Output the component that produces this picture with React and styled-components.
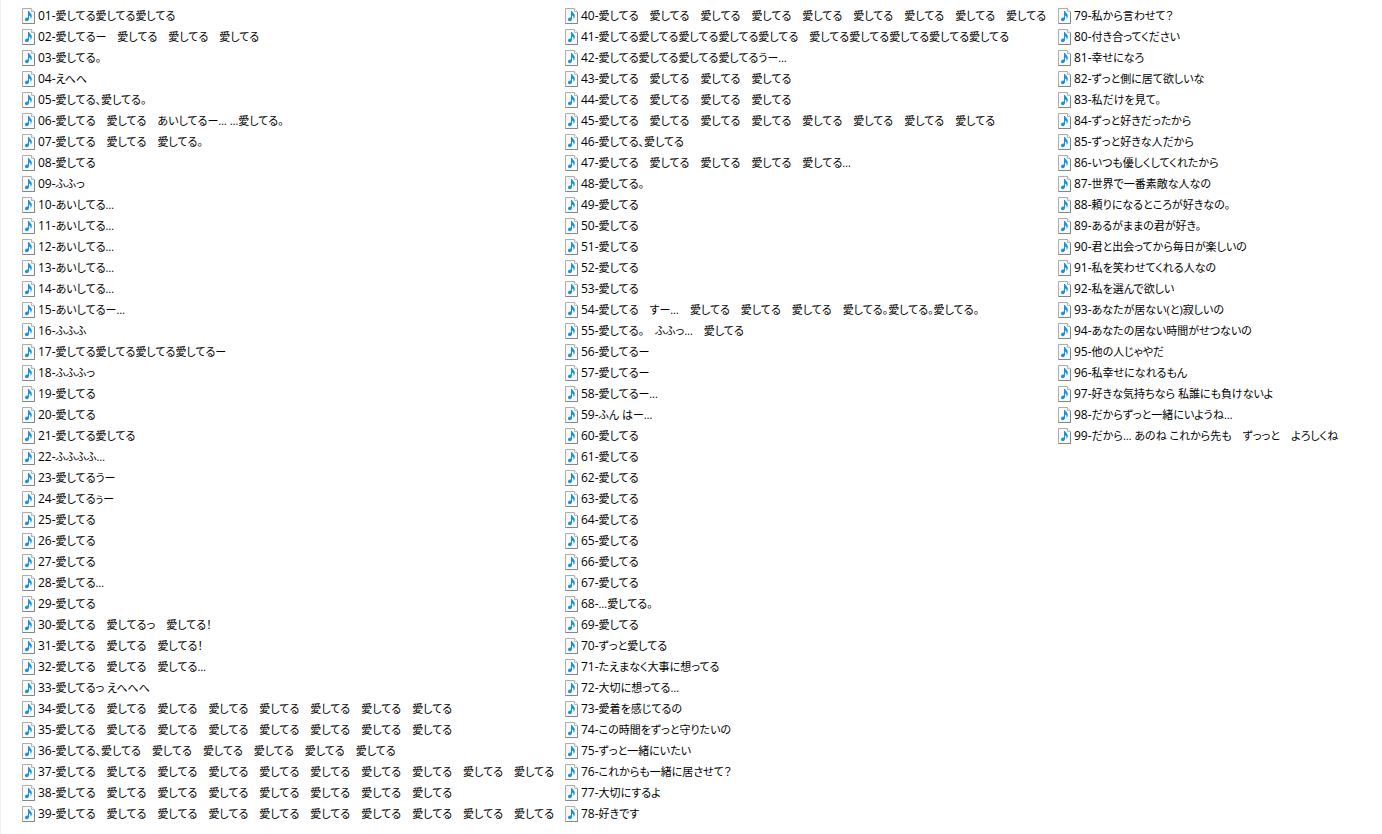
import styled, { createGlobalStyle } from 'styled-components';

const files = [
    '01-愛してる愛してる愛してる',
    '02-愛してるー　愛してる　愛してる　愛してる',
    '03-愛してる。',
    '04-えへへ',
    '05-愛してる、愛してる。',
    '06-愛してる　愛してる　あいしてるー… …愛してる。',
    '07-愛してる　愛してる　愛してる。',
    '08-愛してる',
    '09-ふふっ',
    '10-あいしてる…',
    '11-あいしてる…',
    '12-あいしてる…',
    '13-あいしてる…',
    '14-あいしてる…',
    '15-あいしてるー…',
    '16-ふふふ',
    '17-愛してる愛してる愛してる愛してるー',
    '18-ふふふっ',
    '19-愛してる',
    '20-愛してる',
    '21-愛してる愛してる',
    '22-ふふふふ…',
    '23-愛してるうー',
    '24-愛してるぅー',
    '25-愛してる',
    '26-愛してる',
    '27-愛してる',
    '28-愛してる…',
    '29-愛してる',
    '30-愛してる　愛してるっ　愛してる！',
    '31-愛してる　愛してる　愛してる！',
    '32-愛してる　愛してる　愛してる…',
    '33-愛してるっ えへへへ',
    '34-愛してる　愛してる　愛してる　愛してる　愛してる　愛してる　愛してる　愛してる',
    '35-愛してる　愛してる　愛してる　愛してる　愛してる　愛してる　愛してる　愛してる',
    '36-愛してる、愛してる　愛してる　愛してる　愛してる　愛してる　愛してる',
    '37-愛してる　愛してる　愛してる　愛してる　愛してる　愛してる　愛してる　愛してる　愛してる　愛してる',
    '38-愛してる　愛してる　愛してる　愛してる　愛してる　愛してる　愛してる　愛してる',
    '39-愛してる　愛してる　愛してる　愛してる　愛してる　愛してる　愛してる　愛してる　愛してる　愛してる',
    '40-愛してる　愛してる　愛してる　愛してる　愛してる　愛してる　愛してる　愛してる　愛してる',
    '41-愛してる愛してる愛してる愛してる愛してる　愛してる愛してる愛してる愛してる愛してる',
    '42-愛してる愛してる愛してる愛してるうー…',
    '43-愛してる　愛してる　愛してる　愛してる',
    '44-愛してる　愛してる　愛してる　愛してる',
    '45-愛してる　愛してる　愛してる　愛してる　愛してる　愛してる　愛してる　愛してる',
    '46-愛してる、愛してる',
    '47-愛してる　愛してる　愛してる　愛してる　愛してる…',
    '48-愛してる。',
    '49-愛してる',
    '50-愛してる',
    '51-愛してる',
    '52-愛してる',
    '53-愛してる',
    '54-愛してる　すー…　愛してる　愛してる　愛してる　愛してる。愛してる。愛してる。',
    '55-愛してる。　ふふっ…　愛してる',
    '56-愛してるー',
    '57-愛してるー',
    '58-愛してるー…',
    '59-ふん はー…',
    '60-愛してる',
    '61-愛してる',
    '62-愛してる',
    '63-愛してる',
    '64-愛してる',
    '65-愛してる',
    '66-愛してる',
    '67-愛してる',
    '68-…愛してる。',
    '69-愛してる',
    '70-ずっと愛してる',
    '71-たえまなく大事に想ってる',
    '72-大切に想ってる…',
    '73-愛着を感じてるの',
    '74-この時間をずっと守りたいの',
    '75-ずっと一緒にいたい',
    '76-これからも一緒に居させて？',
    '77-大切にするよ',
    '78-好きです',
    '79-私から言わせて？',
    '80-付き合ってください',
    '81-幸せになろ',
    '82-ずっと側に居て欲しいな',
    '83-私だけを見て。',
    '84-ずっと好きだったから',
    '85-ずっと好きな人だから',
    '86-いつも優しくしてくれたから',
    '87-世界で一番素敵な人なの',
    '88-頼りになるところが好きなの。',
    '89-あるがままの君が好き。',
    '90-君と出会ってから毎日が楽しいの',
    '91-私を笑わせてくれる人なの',
    '92-私を選んで欲しい',
    '93-あなたが居ない(と)寂しいの',
    '94-あなたの居ない時間がせつないの',
    '95-他の人じゃやだ',
    '96-私幸せになれるもん',
    '97-好きな気持ちなら 私誰にも負けないよ',
    '98-だからずっと一緒にいようね…',
    '99-だから… あのね これから先も　ずっっと　よろしくね',
];

const MusicFileIcon = () => (
    <Icon viewBox="0 0 13 16" aria-hidden="true">
        <path d="M.5.5h9l3 3v12H.5z" fill="#fafafa" stroke="#adadad" />
        <path d="M9.5.5v3h3" fill="#fff" stroke="#b8b8b8" />
        <path d="M12.5 4v11.500H.5" fill="none" stroke="#858585" />
        <path
            d="M6 3h1c.2 1.600 2.800 2.300 2.800 5 0 1.200-.5 2.200-1.300 3 .4-1.700 0-2.900-1.500-3.500v3.300c0 1.500-1 2.500-2.200 2.500C3.700 13.300 3 12.600 3 11.600c0-1.300 1.300-2.300 3-2z"
            fill="#1593dc"
        />
    </Icon>
);

const App = () => {
    return (
        <>
            <GlobalStyle />
            <Pane>
                <FileList>
                    {files.map(name => (
                        <FileItem key={name}>
                            <MusicFileIcon />
                            <FileName>
                                {name.slice(0, 3)}
                                <Title>{name.slice(3)}</Title>
                            </FileName>
                        </FileItem>
                    ))}
                </FileList>
            </Pane>
        </>
    );
};
export default App;

const GlobalStyle = createGlobalStyle`
    body {
        margin: 0;
        background-color: #fff;
    }
`;

const Pane = styled.main`
    box-sizing: border-box;
    min-height: 100vh;
    padding: 5px 0 0 21px;
    border-left: 1px solid #f0f0f0;
    overflow: hidden;
`;

const FileList = styled.ul`
    display: grid;
    grid-auto-flow: column;
    grid-template-rows: repeat(39, 21px);
    grid-template-columns: 543px 493px auto;
    margin: 0;
    padding: 0;
    list-style: none;
`;

const FileItem = styled.li`
    display: flex;
    align-items: center;
    gap: 3px;
`;

const Icon = styled.svg`
    flex: none;
    width: 13px;
    height: 16px;
`;

const FileName = styled.span`
    font-family: 'Open Sans', 'Noto Sans CJK JP', sans-serif;
    font-size: 12px;
    line-height: 21px;
    color: #000;
    white-space: pre;
`;

const Title = styled.span`
    font-size: 11px;
    font-feature-settings: 'palt';
`;
